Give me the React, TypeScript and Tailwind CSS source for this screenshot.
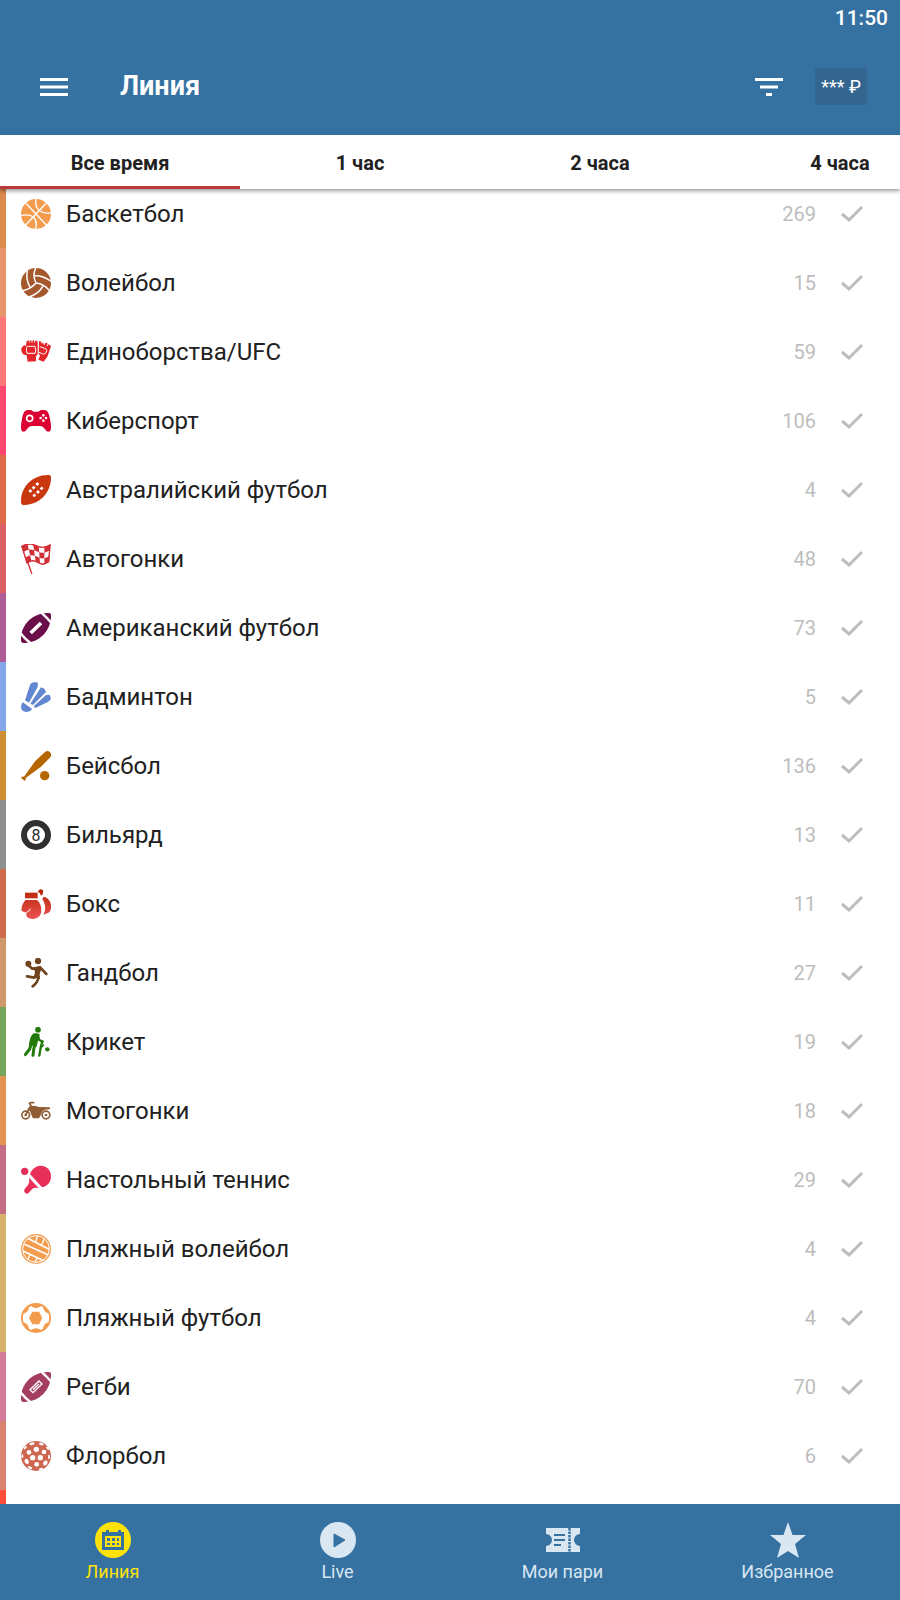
import { useLayoutEffect, useRef, useState } from 'react';
import type { ReactNode } from 'react';
import { clsx } from 'clsx';

interface Sport {
  name: string;
  count: number;
  strip: string;
  icon: ReactNode;
}

const FOOTBALL = 'M0 83C-2 38 32-1 84 0q6 0 6 6C91 52 56 91 7 90q-6 0-7-7Z';

// corner of the waving flag, u runs along the top edge and v down the pole
function flagPoint(u: number, v: number) {
  const x = 3 + 84 * u + v * (15 - 19 * u);
  const y = 7 - 6 * Math.sin(2 * Math.PI * u) - 4 * u + 50 * v;
  return `${x.toFixed(1)},${y.toFixed(1)}`;
}

function flagCell(u0: number, v0: number, u1: number, v1: number) {
  return [
    flagPoint(u0, v0),
    flagPoint((u0 + u1) / 2, v0),
    flagPoint(u1, v0),
    flagPoint(u1, v1),
    flagPoint((u0 + u1) / 2, v1),
    flagPoint(u0, v1),
  ].join(' ');
}

const flagOutline = [
  ...Array.from({ length: 13 }, (_, i) => flagPoint(i / 12, 0)),
  ...Array.from({ length: 13 }, (_, i) => flagPoint(1 - i / 12, 1)),
].join(' ');

const flagCells = Array.from({ length: 15 }, (_, i) => ({ col: i % 5, row: Math.floor(i / 5) })).filter(
  ({ col, row }) => (col + row) % 2 === 1,
);

const sports: Sport[] = [
  {
    name: 'Баскетбол',
    count: 269,
    strip: 'bg-[#da8b4d]',
    icon: (
      <>
        <circle cx="45" cy="45" r="45" fill="#f39c4e" />
        <g fill="none" stroke="#fff" strokeWidth="4">
          <path d="M14 12 76 78M76 12 14 78" />
          <path d="M46 0C40 22 50 45 90 42M0 50C34 42 52 58 44 90" />
        </g>
      </>
    ),
  },
  {
    name: 'Волейбол',
    count: 15,
    strip: 'bg-[#e5946b]',
    icon: (
      <>
        <circle cx="45" cy="45" r="45" fill="#a4582c" />
        <g fill="none" stroke="#fff" strokeWidth="4.5">
          <path d="M41 23C58 22 76 29 92 41" />
          <path d="M45 45C34 58 21 66 0 69" />
          <path d="M67 52C59 68 45 80 24 87" />
          <path d="M86 68C75 55 62 47 45 45 37 30 37 14 45-2" />
          <path d="M19 8C15 26 19 44 28 60" />
        </g>
      </>
    ),
  },
  {
    name: 'Единоборства/UFC',
    count: 59,
    strip: 'bg-[#ff7776]',
    icon: (
      <>
        <g fill="#e3242b">
          <path d="M1 33 9 25 15 27 17 12 25 10 32 11 40 10 50 13V52L45 58V73L20 74 17 55 6 52 1 42Z" />
          <path d="M54 12 61 14 68 20 76 17 90 27 85 43 79 59 68 74 52 68 57 56 53 50Z" />
        </g>
        <g fill="none" stroke="#fff" strokeWidth="3">
          <path d="M17 31q-2 9 1 18h24q5-9 0-21H22q-5 0-5 3M56 29l18 6q6 5 1 12l-7 5-14-6" />
          <path d="M25 8v9M33 8v9M41 8v9M64 11l-2 9M73 15l-4 9M82 19l-4 9" strokeWidth="2.5" />
        </g>
      </>
    ),
  },
  {
    name: 'Киберспорт',
    count: 106,
    strip: 'bg-[#ff466f]',
    icon: (
      <>
        <path
          d="M20 12h9c5 0 5 5 10 5h12c5 0 5-5 10-5h9c10 0 14 11 17 27 4 21 6 38-5 38-9 0-13-17-23-17H31C21 60 17 77 8 77-3 77-1 60 3 39 6 23 10 12 20 12Z"
          fill="#dc0032"
        />
        <circle cx="26" cy="37" r="9" fill="none" stroke="#fff" strokeWidth="5" />
        <g fill="#fff">
          <circle cx="67" cy="28" r="4" />
          <circle cx="67" cy="44" r="4" />
          <circle cx="59" cy="36" r="4" />
          <circle cx="75" cy="36" r="4" />
        </g>
      </>
    ),
  },
  {
    name: 'Австралийский футбол',
    count: 4,
    strip: 'bg-[#dd6a48]',
    icon: (
      <>
        <path d={FOOTBALL} fill="#c9370f" />
        <g stroke="#fff" strokeWidth="8">
          <path d="m25 51 6-6M35 41l6-6M46 30l6-6M37 64l6-6M48 54l6-6M59 43l6-6" />
        </g>
      </>
    ),
  },
  {
    name: 'Автогонки',
    count: 48,
    strip: 'bg-[#dc5f63]',
    icon: (
      <>
        <path d="M3 7 32 88" stroke="#d12f36" strokeWidth="4" strokeLinecap="round" />
        <polygon points={flagOutline} fill="#d12f36" stroke="#d12f36" strokeWidth="3" />
        {flagCells.map(({ col, row }) => (
          <polygon
            key={`${col}-${row}`}
            points={flagCell(col / 5, row / 3, (col + 1) / 5, (row + 1) / 3)}
            fill="#fff"
          />
        ))}
        <polygon points={flagOutline} fill="none" stroke="#d12f36" strokeWidth="4" />
      </>
    ),
  },
  {
    name: 'Американский футбол',
    count: 73,
    strip: 'bg-[#ae5d98]',
    icon: (
      <>
        <path d={FOOTBALL} fill="#6b0f4b" />
        <g fill="none" stroke="#fff">
          <path d="M-2 60Q12 78 32 93M60-2Q78 14 93 32" strokeWidth="7" />
          <path d="M29 60 60 30" strokeWidth="11" />
        </g>
      </>
    ),
  },
  {
    name: 'Бадминтон',
    count: 5,
    strip: 'bg-[#84a6ea]',
    icon: (
      <g fill="#6287d0">
        <path d="M5 61 33 80q-2 6-8 8C13 93 0 87 0 75q0-8 5-14Z" />
        <path d="M28 6 38 0 51 2 50 15 24 62 12 55Z" />
        <path d="M60 16 70 20 75 30 36 69 28 65Z" />
        <path d="M86 38 90 51 82 59 43 78 38 73 75 39Z" />
      </g>
    ),
  },
  {
    name: 'Бейсбол',
    count: 136,
    strip: 'bg-[#d08d32]',
    icon: (
      <g fill="#b56600">
        <path d="M72 3q8-6 15 1t1 15L60 47 14 81q1 5-3 9L0 80q4-4 9-3L42 31Z" />
        <circle cx="71" cy="74" r="14" />
      </g>
    ),
  },
  {
    name: 'Бильярд',
    count: 13,
    strip: 'bg-[#8f8f8f]',
    icon: (
      <>
        <circle cx="45" cy="45" r="45" fill="#303030" />
        <circle cx="45" cy="45" r="27" fill="#fff" />
        <text x="45" y="62" textAnchor="middle" className="font-['Roboto'] text-[48px]" fill="#303030">
          8
        </text>
      </>
    ),
  },
  {
    name: 'Бокс',
    count: 11,
    strip: 'bg-[#cf6c4e]',
    icon: (
      <>
        <defs>
          <linearGradient id="boxing" x1="0" y1="0" x2="0" y2="90" gradientUnits="userSpaceOnUse">
            <stop offset="0" stopColor="#b42402" />
            <stop offset="1" stopColor="#ed5353" />
          </linearGradient>
        </defs>
        <g fill="url(#boxing)">
          <path d="M12 11h38v17H12Z" />
          <path d="M14 33h34c11 10 16 25 11 42-7 18-35 19-42 7-2-5-1-8 1-12-4 2-13-1-17-6Q2 45 14 33Z" />
          <path d="M68 23C90 27 96 55 85 70L67 78C76 60 73 43 64 31Z" />
          <path d="M50 8 57 0 67 4 65 16 60 20 56 12Z" />
        </g>
        <path d="M17 70q8-2 11-11" fill="none" stroke="#fff" strokeWidth="3" />
      </>
    ),
  },
  {
    name: 'Гандбол',
    count: 27,
    strip: 'bg-[#cf996a]',
    icon: (
      <>
        <g fill="#70431d">
          <circle cx="51" cy="9" r="9.5" />
          <circle cx="22" cy="17" r="9" />
          <path d="M32 29 58 23 62 30 56 48 57 64 40 58 42 40Z" />
        </g>
        <g fill="none" stroke="#70431d" strokeWidth="8" strokeLinecap="round" strokeLinejoin="round">
          <path d="M20 20 34 32H50" />
          <path d="M58 29 76 48" />
          <path d="M47 48 40 59 18 55" />
          <path d="M52 58Q50 74 35 85" />
        </g>
      </>
    ),
  },
  {
    name: 'Крикет',
    count: 19,
    strip: 'bg-[#73a65c]',
    icon: (
      <>
        <g fill="#237a0b">
          <circle cx="51" cy="8" r="8.5" />
          <circle cx="79" cy="67" r="6.5" />
          <path d="M38 19Q48 17 56 22L50 46 47 59 24 54Q26 28 38 19Z" />
        </g>
        <g fill="none" stroke="#237a0b" strokeLinecap="round" strokeLinejoin="round">
          <path d="M30 52 26 66 13 83" strokeWidth="9" />
          <path d="M41 53 38 68 36 85" strokeWidth="9" />
          <path d="M51 24 54 38 65 44" strokeWidth="7" />
          <path d="M64 43 59 62 55 86" strokeWidth="7" />
          <path d="M68 54 60 62" strokeWidth="4" />
        </g>
      </>
    ),
  },
  {
    name: 'Мотогонки',
    count: 18,
    strip: 'bg-[#e49352]',
    icon: (
      <>
        <g fill="none" stroke="#8e5d35" strokeWidth="5">
          <circle cx="14" cy="57" r="11.5" />
          <circle cx="75" cy="57" r="11.5" />
          <path d="M14 57 30 29 25 22M28 20h10" strokeLinecap="round" />
        </g>
        <g fill="#8e5d35">
          <circle cx="14" cy="57" r="4" />
          <circle cx="75" cy="57" r="4" />
          <path d="M26 32Q38 26 52 33L86 34 88 39 72 41Q62 45 59 58L54 67H36L31 56 27 45 19 39Z" />
        </g>
      </>
    ),
  },
  {
    name: 'Настольный теннис',
    count: 29,
    strip: 'bg-[#c66d86]',
    icon: (
      <g fill="#e72f5a">
        <circle cx="11" cy="19" r="11" />
        <path d="M27 27C34 8 50 1 62 2 80 4 90 18 90 34 90 51 80 64 63 67Z" />
        <path d="M24 38Q27 51 21 60L11 72q-4 6 1 11t11 1L34 71Q42 66 53 69Z" />
      </g>
    ),
  },
  {
    name: 'Пляжный волейбол',
    count: 4,
    strip: 'bg-[#d6b26b]',
    icon: (
      <>
        <circle cx="45" cy="45" r="45" fill="#f39c4e" />
        <circle cx="45" cy="45" r="40" fill="none" stroke="#fff" strokeWidth="3" />
        <g fill="none" stroke="#fff" strokeWidth="5">
          <path d="M20 13 84 46M10 31 81 62M6 51 68 80" />
          <path d="M50 5 44 23M70 13 62 33M27 62 20 77M48 72 42 86" strokeWidth="4" />
        </g>
      </>
    ),
  },
  {
    name: 'Пляжный футбол',
    count: 4,
    strip: 'bg-[#d6b26b]',
    icon: (
      <>
        <circle cx="45" cy="45" r="45" fill="#f39c4e" />
        <path
          d="M30 9Q45 22 60 9L66 13Q68 27 83 32 86 45 83 58 68 61 66 77L60 81Q45 70 30 81L24 77Q22 62 7 58 4 45 7 32 22 29 24 13Z"
          fill="#fff"
        />
        <path d="M34 26H54L64 45 54 64H34L24 45Z" fill="#f39c4e" />
      </>
    ),
  },
  {
    name: 'Регби',
    count: 70,
    strip: 'bg-[#d77b9b]',
    icon: (
      <>
        <path d={FOOTBALL} fill="#a43e61" />
        <g fill="none" stroke="#fff">
          <path d="M-2 60Q12 78 32 93M60-2Q78 14 93 32" strokeWidth="7" />
          <path d="M27 53 54 27 63 36 36 62Z" strokeWidth="4" />
          <path d="M36 53 54 36" strokeWidth="4" />
        </g>
      </>
    ),
  },
  {
    name: 'Флорбол',
    count: 6,
    strip: 'bg-[#d98371]',
    icon: (
      <>
        <circle cx="45" cy="45" r="45" fill="#cd6752" />
        <g fill="#fff">
          <circle cx="46" cy="25" r="8" />
          <circle cx="24" cy="34" r="7" />
          <circle cx="35" cy="50" r="8" />
          <circle cx="58" cy="50" r="8" />
          <circle cx="69" cy="33" r="7" />
          <circle cx="47" cy="70" r="7" />
          <ellipse cx="17" cy="61" rx="6" ry="8" transform="rotate(-25 17 61)" />
          <ellipse cx="73" cy="66" rx="6" ry="8" transform="rotate(35 73 66)" />
          <ellipse cx="33" cy="8" rx="8" ry="4" transform="rotate(-15 33 8)" />
          <ellipse cx="61" cy="9" rx="7" ry="4" transform="rotate(20 61 9)" />
          <ellipse cx="13" cy="20" rx="3" ry="6" transform="rotate(38 13 20)" />
          <ellipse cx="80" cy="22" rx="3" ry="6" transform="rotate(-38 80 22)" />
          <ellipse cx="4" cy="46" rx="3" ry="6" />
          <ellipse cx="84" cy="48" rx="3" ry="7" />
          <ellipse cx="27" cy="80" rx="7" ry="4" transform="rotate(28 27 80)" />
          <ellipse cx="60" cy="84" rx="7" ry="3" transform="rotate(-18 60 84)" />
        </g>
      </>
    ),
  },
];

const periods = ['Все время', '1 час', '2 часа', '4 часа'];

const navItems = [
  {
    label: 'Линия',
    icon: (
      <>
        <circle cx="18" cy="18" r="18" fill="currentColor" />
        <path d="M7 10h22v18H7ZM11 8h3v3h-3ZM23 8h3v3h-3Z" fill="#3572a2" />
        <path d="M10 14h16v11H10Z" fill="currentColor" />
        <path d="M12 16h3v3h-3ZM17 16h3v3h-3ZM22 16h2v3h-2ZM12 21h3v2h-3ZM17 21h3v2h-3ZM22 21h2v2h-2Z" fill="#3572a2" />
      </>
    ),
  },
  {
    label: 'Live',
    icon: (
      <>
        <circle cx="18" cy="18" r="18" fill="currentColor" />
        <path d="M14 12 25 18 14 25Z" fill="#3572a2" stroke="#3572a2" strokeLinejoin="round" />
      </>
    ),
  },
  {
    label: 'Мои пари',
    icon: (
      <>
        <path d="M1 6h34v6a6 6 0 0 0 0 12v6H1v-6a6 6 0 0 0 0-12Z" fill="currentColor" />
        <path d="M9 13h11M9 18h11M9 23h7" stroke="#3572a2" strokeWidth="2" />
        <path d="M24.5 6v24" stroke="#3572a2" strokeWidth="2.5" strokeDasharray="2.5 1" />
      </>
    ),
  },
  {
    label: 'Избранное',
    icon: <path d="M18 0 22.5 13H36L25 22 29 36 18 29 7 36 11 22 0 13H13.5Z" fill="currentColor" />,
  },
];

function SportRow({ name, count, strip, icon }: Sport) {
  return (
    <li className="flex h-[69px]">
      <span className={clsx('w-[6px] shrink-0', strip)} />
      <label className="flex flex-1 cursor-pointer items-center pt-px pr-9 pl-[15px]">
        <svg viewBox="0 0 90 90" className="mr-[15px] size-[30px] shrink-0" aria-hidden="true">
          {icon}
        </svg>
        <span className="flex-1 text-2xl text-[#212121]">{name}</span>
        <span className="mr-6 text-xl text-[#bdbdbd]">{count}</span>
        <span className="grid size-6 place-items-center">
          <input type="checkbox" className="col-start-1 row-start-1 size-6 cursor-pointer appearance-none" />
          <svg viewBox="0 0 24 24" className="pointer-events-none col-start-1 row-start-1 size-6" aria-hidden="true">
            <path d="M2 12 9 18 22 5" fill="none" stroke="#bdbdbd" strokeWidth="3" />
          </svg>
        </span>
      </label>
    </li>
  );
}

export default function App() {
  const [period, setPeriod] = useState(periods[0]);
  const [page, setPage] = useState(navItems[0].label);
  const listRef = useRef<HTMLElement>(null);

  // the list opens slightly scrolled
  useLayoutEffect(() => {
    if (listRef.current) listRef.current.scrollTop = 10;
  }, []);

  return (
    <div className="flex h-screen flex-col bg-white font-['Roboto',sans-serif]">
      <header className="bg-[#3572a2] text-white">
        <div className="flex h-[38px] items-center justify-end px-3 text-[21px] font-medium">11:50</div>
        <div className="flex h-[97px] items-center pr-[33px] pl-9">
          <button type="button" aria-label="Меню" className="mr-12">
            <svg viewBox="0 0 36 36" className="size-9" aria-hidden="true">
              <path d="M4 10.5h28M4 18h28M4 25.5h28" stroke="currentColor" strokeWidth="3" />
            </svg>
          </button>
          <h1 className="flex-1 text-[27px] font-bold">Линия</h1>
          <button type="button" aria-label="Фильтр" className="mr-7">
            <svg viewBox="0 0 36 36" className="size-9" aria-hidden="true">
              <path d="M4 10.5h28M9 18h18M15 25.5h6" stroke="currentColor" strokeWidth="3" />
            </svg>
          </button>
          <button type="button" className="h-[37px] rounded-xs bg-[#33658f] px-[6px] text-lg">
            *** ₽
          </button>
        </div>
      </header>

      <div role="tablist" className="relative z-10 flex h-[54px] shrink-0 overflow-x-clip bg-white shadow-[0_2px_4px_rgba(0,0,0,0.4)]">
        {periods.map((item) => (
          <button
            key={item}
            type="button"
            role="tab"
            aria-selected={period === item}
            onClick={() => setPeriod(item)}
            className={clsx(
              'w-4/15 shrink-0 border-b-3 pt-1 text-xl font-bold text-[#212121]',
              period === item ? 'border-[#bd3a3c]' : 'border-transparent',
            )}
          >
            {item}
          </button>
        ))}
      </div>

      <main ref={listRef} className="min-h-0 flex-1 overflow-y-auto [scrollbar-width:none]">
        <ul>
          {sports.map((sport) => (
            <SportRow key={sport.name} {...sport} />
          ))}
        </ul>
        <div className="h-[69px] w-[6px] bg-[#ff4f3a]" />
      </main>

      <nav className="grid h-24 shrink-0 grid-cols-4 bg-[#3572a2]">
        {navItems.map(({ label, icon }) => (
          <button
            key={label}
            type="button"
            onClick={() => setPage(label)}
            className={clsx('flex flex-col items-center pt-[18px] text-lg', page === label ? 'text-[#ffe20a]' : 'text-[#d9e7f3]')}
          >
            <svg viewBox="0 0 36 36" className="size-9" aria-hidden="true">
              {icon}
            </svg>
            {label}
          </button>
        ))}
      </nav>
    </div>
  );
}
